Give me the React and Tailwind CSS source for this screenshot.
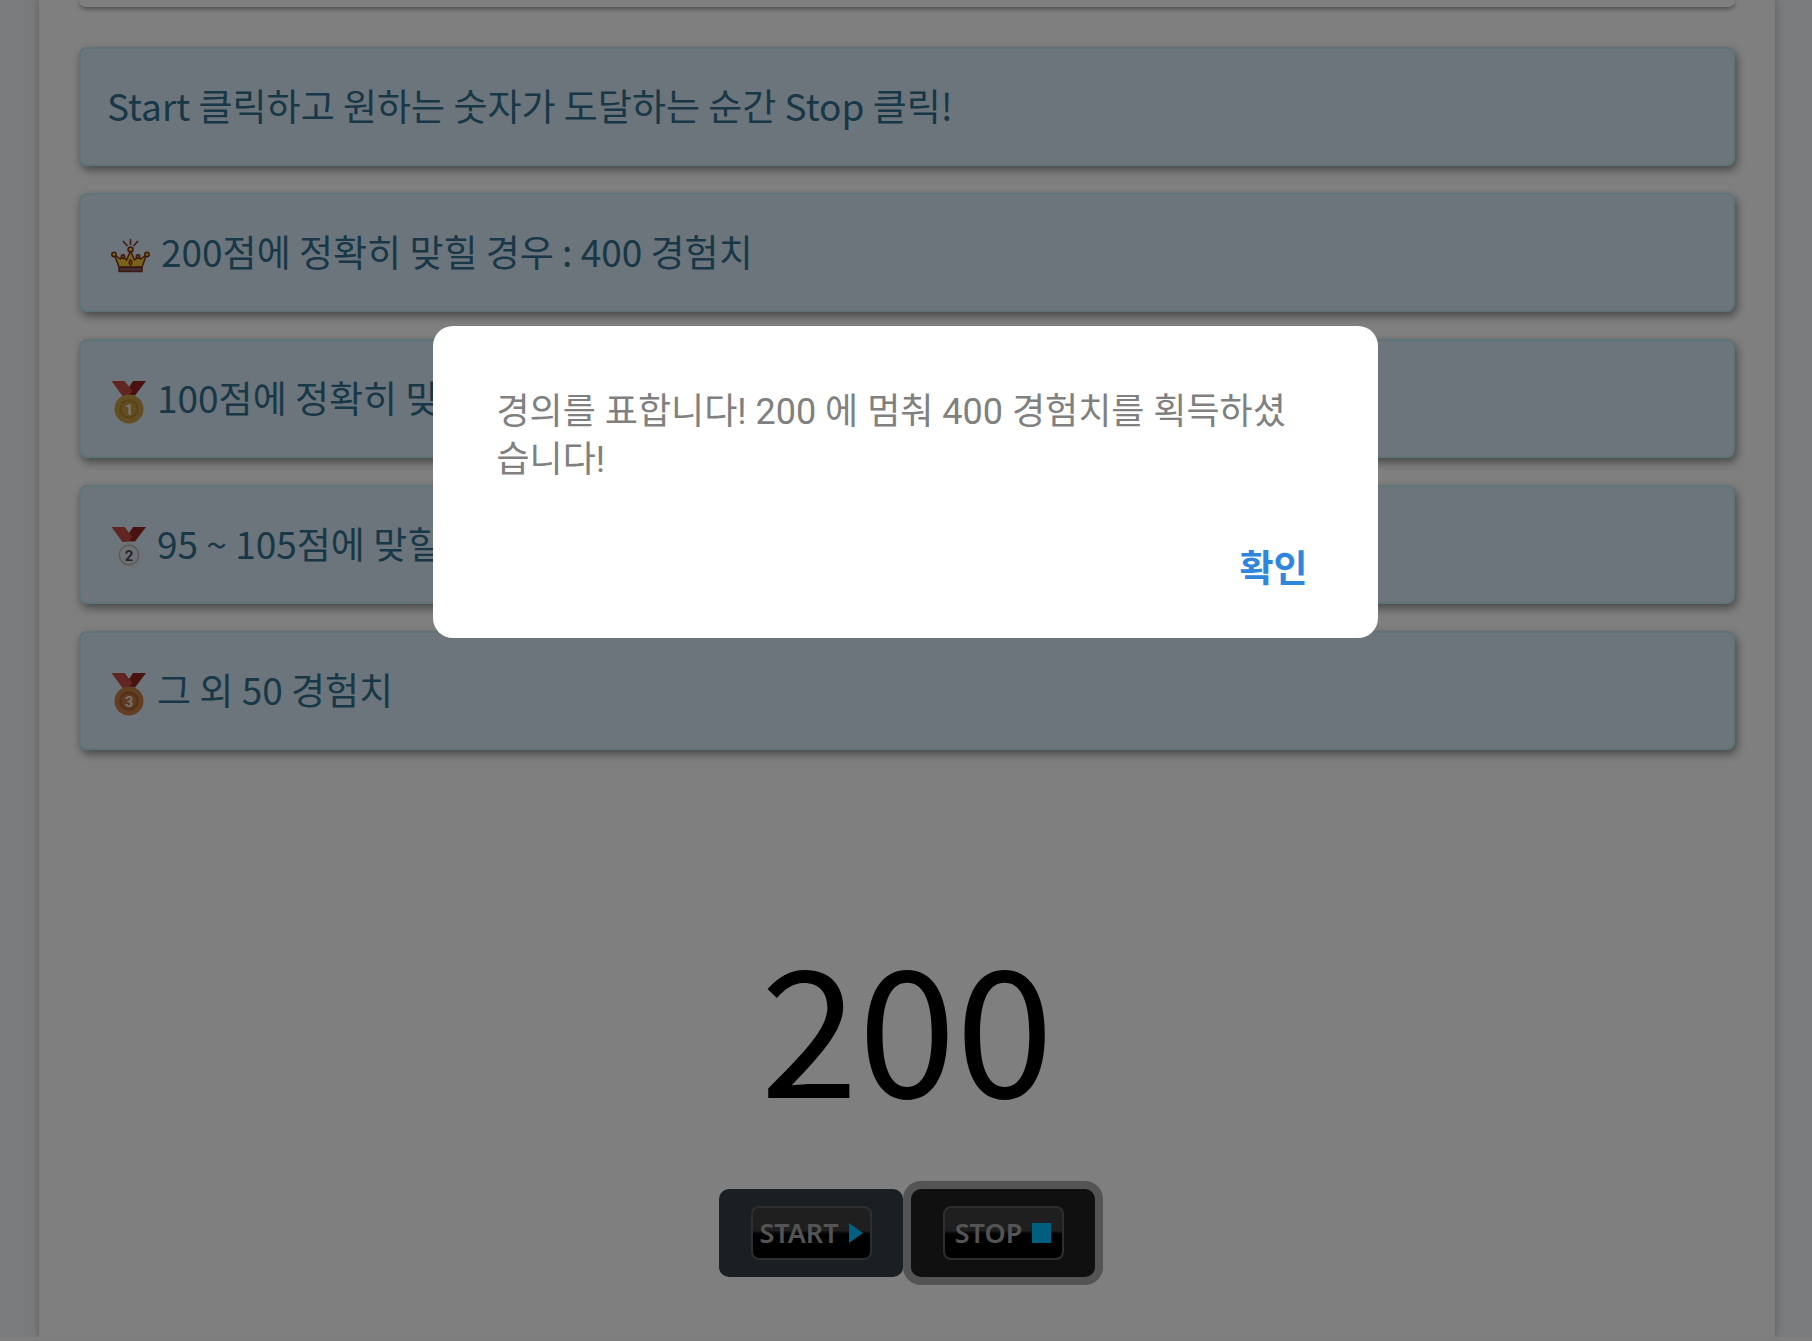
import React, { useState } from "react";

const RULES = [
  { id: "crown", icon: "crown", text: "200점에 정확히 맞힐 경우 : 400 경험치" },
  { id: "gold", icon: "1", text: "100점에 정확히 맞힐 경우 : 200 경험치" },
  { id: "silver", icon: "2", text: "95 ~ 105점에 맞힐 경우 : 100 경험치" },
  { id: "bronze", icon: "3", text: "그 외 50 경험치" },
];

const MEDAL_COLORS = {
  1: { rim: "#c69a45", inner: "#b5872f", core: "#c69a45", num: "#f5efe0" },
  2: { rim: "#e0d8d0", inner: "#b9b4ae", core: "#e4e0dc", num: "#4a4a4a" },
  3: { rim: "#c57c45", inner: "#a4622f", core: "#bd7440", num: "#f0e2d4" },
};

function Crown() {
  return (
    <svg
      className="w-11 h-11 ml-0.5 mt-[18px] shrink-0"
      viewBox="1 0 44 44"
      stroke="#7c3018"
      strokeWidth="1.5"
      strokeLinejoin="round"
      aria-hidden="true"
    >
      <path d="M22.500 1v6M15 3l4.500 5M30 3l-4.500 5" fill="none" />
      <path
        d="M11 29 6.500 17l6 4 2.500-2 3.500 3 4-9 4 9 3.500-3 2.500 2 6-4L34 29z"
        fill="#f0c634"
      />
      <path d="M11 29.500h23v4H11z" fill="#7d6470" />
      <circle cx="22.500" cy="11.500" r="2.500" fill="#f0c634" />
      <circle cx="6" cy="16.500" r="2.200" fill="#f0c634" />
      <circle cx="39" cy="16.500" r="2.200" fill="#f0c634" />
      <circle cx="15" cy="18.500" r="1.800" fill="#dc8a28" />
      <circle cx="30" cy="18.500" r="1.800" fill="#dc8a28" />
      <path
        d="m22.500 21 1.800 3.500-1.800 3.500-1.800-3.500z"
        fill="#c8501f"
        strokeWidth="1"
      />
    </svg>
  );
}

function Medal({ place }) {
  const c = MEDAL_COLORS[place];
  const silver = place === "2";
  return (
    <svg className="w-10 h-11 ml-0.5 mt-2.5 shrink-0" viewBox="0 0 40 44" aria-hidden="true">
      <path d="M24 1h13L26 15.500h-8l-1-3.500z" fill="#94251f" />
      <path d="M2.500 1h13l8 10-5 5h-5z" fill="#c24a44" />
      <circle cx="20" cy="29" r="14.500" fill={c.rim} fillOpacity={silver ? 0.2 : 1} />
      <circle
        cx="20"
        cy="29"
        r="9.700"
        fill={silver ? c.core : c.inner}
        fillOpacity={silver ? 0.3 : 1}
        stroke={silver ? c.inner : "none"}
        strokeWidth="1.500"
      />
      {!silver && <circle cx="20" cy="29" r="7.500" fill={c.core} />}
      <text
        x="20"
        y="34.500"
        textAnchor="middle"
        fontSize="15"
        fontWeight="700"
        fontFamily="Roboto, sans-serif"
        fill={c.num}
      >
        {place}
      </text>
    </svg>
  );
}

function Notice({ children }) {
  return (
    <div className="flex items-center gap-2 h-[119px] px-[26px] pb-1 rounded-lg border-2 border-[#bce8f1] bg-[#d9ebf7] text-[#31708f] text-[37px] leading-[52px] shadow-[2px_4px_10px_rgba(0,0,0,0.45)]">
      {children}
    </div>
  );
}

function GameButton({ label, className, children, onClick }) {
  return (
    <button
      type="button"
      onClick={onClick}
      className={`flex items-center justify-center w-[184px] h-[88px] rounded-[10px] ${className}`}
    >
      <span className="flex items-center justify-center gap-2.5 w-[121px] h-[54px] rounded-lg border-2 border-[#5c5c5c] bg-linear-to-b from-[#3e3e3e] from-45% to-black to-55% font-['Noto_Sans',sans-serif] font-semibold text-[27px] leading-8 text-[#a8a8a8]">
        {label}
        {children}
      </span>
    </button>
  );
}

function ResultDialog({ score, onClose }) {
  return (
    <div className="fixed inset-0 z-10 flex items-start justify-center bg-black/50 pt-[326px] pr-0.5">
      <div
        role="dialog"
        aria-modal="true"
        className="w-[945px] max-w-full rounded-[20px] bg-white px-16 pt-[62px] pb-10"
      >
        <p className="font-[Roboto,'Noto_Sans_CJK_KR',sans-serif] text-4xl leading-12 text-[#808080] break-all">
          경의를 표합니다! {score} 에 멈춰 400 경험치를 획득하셨습니다!
        </p>
        <div className="flex justify-end mt-[50px]">
          <button
            type="button"
            onClick={onClose}
            className="px-[6px] py-2 font-bold text-[37px] leading-12 text-[#2f86dc]"
          >
            확인
          </button>
        </div>
      </div>
    </div>
  );
}

export default function App() {
  const [open, setOpen] = useState(true);
  const [score, setScore] = useState(200);

  return (
    <div className="min-h-screen flex flex-col bg-[#f5f6fa] font-['Noto_Sans_CJK_KR',sans-serif]">
      <main className="flex-1 ml-[39px] mr-[37px] px-10 bg-white shadow-[0_0_8px_rgba(0,0,0,0.25)]">
        <div className="h-[7px] rounded-b-lg bg-white shadow-[0_2px_5px_rgba(0,0,0,0.4)]" />

        <section className="flex flex-col gap-[27px] mt-10">
          <Notice>
            Start 클릭하고 원하는 숫자가 도달하는 순간 Stop 클릭!
          </Notice>
          {RULES.map((rule) => (
            <Notice key={rule.id}>
              {rule.icon === "crown" ? <Crown /> : <Medal place={rule.icon} />}
              <span>{rule.text}</span>
            </Notice>
          ))}
        </section>

        <div className="mt-[142px] text-center text-[176px] leading-[260px] text-black">
          {score}
        </div>

        <div className="flex justify-center gap-2 mt-[37px] pb-[60px]">
          <GameButton
            label="START"
            className="bg-[#343e46]"
            onClick={() => setScore(0)}
          >
            <svg className="w-3.5 h-5" viewBox="0 0 14 20" aria-hidden="true">
              <path d="M0 0l14 10L0 20z" fill="#00bfff" />
            </svg>
          </GameButton>
          <GameButton
            label="STOP"
            className="bg-[#212121] ring-8 ring-[#a8a8a8]"
            onClick={() => setOpen(true)}
          >
            <svg className="w-[19px] h-5" viewBox="0 0 19 20" aria-hidden="true">
              <path d="M0 0h19v20H0z" fill="#00bfff" />
            </svg>
          </GameButton>
        </div>
      </main>
      <footer className="h-1 bg-[#fffcfd]" />

      {open && <ResultDialog score={score} onClose={() => setOpen(false)} />}
    </div>
  );
}
